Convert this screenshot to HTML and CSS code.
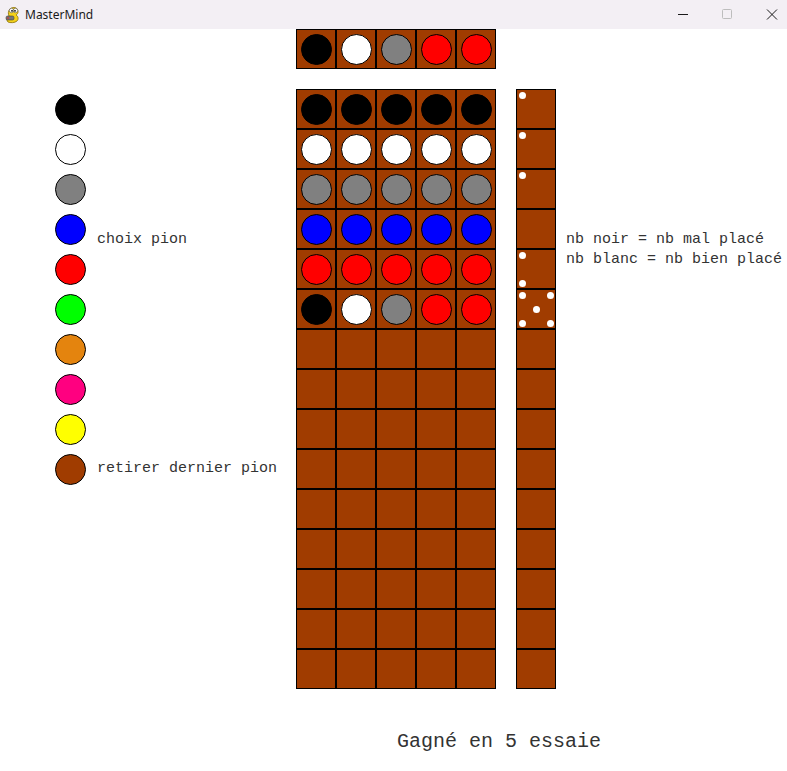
FILE: index.html
```html
<!DOCTYPE html>
<html lang="fr">
<head>
<meta charset="utf-8">
<title>MasterMind</title>
<link rel="stylesheet" href="styles.css">
</head>
<body>
<div class="titlebar">
  <svg class="app-icon" width="16" height="18" viewBox="0 0 16 18">
    <path d="M3 16 C1 14 2 11 4 10 C3 8 3 5 5 3 C7 1 11 1 12 3 C14 5 13 8 11 9 C13 10 14 13 12 15 C10 17 5 17 3 16 Z" fill="#f4d21a" stroke="#8a6d00" stroke-width="0.8"/>
    <circle cx="6.5" cy="4.5" r="2.2" fill="#fff" stroke="#333" stroke-width="0.5"/>
    <circle cx="10.5" cy="4.5" r="2.2" fill="#fff" stroke="#333" stroke-width="0.5"/>
    <circle cx="7" cy="4.8" r="0.9" fill="#000"/>
    <circle cx="10" cy="4.8" r="0.9" fill="#000"/>
    <rect x="1" y="10" width="8" height="4" rx="1.5" fill="#777" stroke="#333" stroke-width="0.5"/>
    <circle cx="3" cy="12" r="0.8" fill="#e22"/>
  </svg>
  <span class="app-title">MasterMind</span>
  <div class="controls">
    <svg class="ctl" width="44" height="29" viewBox="0 0 44 29"><path d="M17 14.5 H27" stroke="#1a1a1a" stroke-width="1"/></svg>
    <svg class="ctl" width="44" height="29" viewBox="0 0 44 29"><rect x="17.5" y="9.5" width="9" height="9" rx="1" fill="none" stroke="#bdbdbd" stroke-width="1"/></svg>
    <svg class="ctl" width="38" height="29" viewBox="0 0 38 29"><path d="M18 9.5 L28 19.5 M28 9.5 L18 19.5" stroke="#1a1a1a" stroke-width="1"/></svg>
  </div>
</div>

<div class="game">
  <div class="code">
    <div class="cell"><div class="peg black"></div></div>
    <div class="cell"><div class="peg white"></div></div>
    <div class="cell"><div class="peg gray"></div></div>
    <div class="cell"><div class="peg red"></div></div>
    <div class="cell"><div class="peg red"></div></div>
  </div>

  <div class="main">
    <div class="palette">
      <div class="prow"><div class="peg black"></div></div>
      <div class="prow"><div class="peg white"></div></div>
      <div class="prow"><div class="peg gray"></div></div>
      <div class="prow"><div class="peg blue"></div><span class="label label-choice">choix pion</span></div>
      <div class="prow"><div class="peg red"></div></div>
      <div class="prow"><div class="peg green"></div></div>
      <div class="prow"><div class="peg orange"></div></div>
      <div class="prow"><div class="peg pink"></div></div>
      <div class="prow"><div class="peg yellow"></div></div>
      <div class="prow"><div class="peg brown"></div><span class="label label-remove">retirer dernier pion</span></div>
    </div>

    <div class="board">
      <div class="cell"><div class="peg black"></div></div>
      <div class="cell"><div class="peg black"></div></div>
      <div class="cell"><div class="peg black"></div></div>
      <div class="cell"><div class="peg black"></div></div>
      <div class="cell"><div class="peg black"></div></div>

      <div class="cell"><div class="peg white"></div></div>
      <div class="cell"><div class="peg white"></div></div>
      <div class="cell"><div class="peg white"></div></div>
      <div class="cell"><div class="peg white"></div></div>
      <div class="cell"><div class="peg white"></div></div>

      <div class="cell"><div class="peg gray"></div></div>
      <div class="cell"><div class="peg gray"></div></div>
      <div class="cell"><div class="peg gray"></div></div>
      <div class="cell"><div class="peg gray"></div></div>
      <div class="cell"><div class="peg gray"></div></div>

      <div class="cell"><div class="peg blue"></div></div>
      <div class="cell"><div class="peg blue"></div></div>
      <div class="cell"><div class="peg blue"></div></div>
      <div class="cell"><div class="peg blue"></div></div>
      <div class="cell"><div class="peg blue"></div></div>

      <div class="cell"><div class="peg red"></div></div>
      <div class="cell"><div class="peg red"></div></div>
      <div class="cell"><div class="peg red"></div></div>
      <div class="cell"><div class="peg red"></div></div>
      <div class="cell"><div class="peg red"></div></div>

      <div class="cell"><div class="peg black"></div></div>
      <div class="cell"><div class="peg white"></div></div>
      <div class="cell"><div class="peg gray"></div></div>
      <div class="cell"><div class="peg red"></div></div>
      <div class="cell"><div class="peg red"></div></div>

      <div class="cell"></div><div class="cell"></div><div class="cell"></div><div class="cell"></div><div class="cell"></div>
      <div class="cell"></div><div class="cell"></div><div class="cell"></div><div class="cell"></div><div class="cell"></div>
      <div class="cell"></div><div class="cell"></div><div class="cell"></div><div class="cell"></div><div class="cell"></div>
      <div class="cell"></div><div class="cell"></div><div class="cell"></div><div class="cell"></div><div class="cell"></div>
      <div class="cell"></div><div class="cell"></div><div class="cell"></div><div class="cell"></div><div class="cell"></div>
      <div class="cell"></div><div class="cell"></div><div class="cell"></div><div class="cell"></div><div class="cell"></div>
      <div class="cell"></div><div class="cell"></div><div class="cell"></div><div class="cell"></div><div class="cell"></div>
      <div class="cell"></div><div class="cell"></div><div class="cell"></div><div class="cell"></div><div class="cell"></div>
      <div class="cell"></div><div class="cell"></div><div class="cell"></div><div class="cell"></div><div class="cell"></div>
    </div>

    <div class="feedback">
      <div class="fcell"><span class="pin tl"></span></div>
      <div class="fcell"><span class="pin tl"></span></div>
      <div class="fcell"><span class="pin tl"></span></div>
      <div class="fcell"></div>
      <div class="fcell"><span class="pin tl"></span><span class="pin bl"></span></div>
      <div class="fcell"><span class="pin tl"></span><span class="pin tr"></span><span class="pin mid"></span><span class="pin bl"></span><span class="pin br"></span></div>
      <div class="fcell"></div>
      <div class="fcell"></div>
      <div class="fcell"></div>
      <div class="fcell"></div>
      <div class="fcell"></div>
      <div class="fcell"></div>
      <div class="fcell"></div>
      <div class="fcell"></div>
      <div class="fcell"></div>
    </div>

    <div class="notes">
      <div>nb noir = nb mal placé</div>
      <div>nb blanc = nb bien placé</div>
    </div>
  </div>

  <div class="result">Gagné en 5 essaie</div>
</div>
</body>
</html>
```

FILE: styles.css
```css
* { box-sizing: border-box; }
html, body {
  margin: 0;
  padding: 0;
  background: #ffffff;
  width: 787px;
  height: 771px;
  overflow: hidden;
}

.titlebar {
  height: 29px;
  background: #f3eff4;
  display: flex;
  align-items: center;
  font-family: "Noto Sans", "Open Sans", sans-serif;
  font-size: 12px;
  color: #1a1a1a;
}
.app-icon { margin-left: 5px; margin-top: 1px; }
.app-title { margin-left: 4px; }
.controls { margin-left: auto; display: flex; align-items: center; }
.ctl { display: block; }

.game {
  font-family: "Liberation Mono", "Courier New", monospace;
  color: #333333;
}

.code {
  display: flex;
  margin-left: 296px;
}

.cell {
  width: 40px;
  height: 40px;
  background: #a03c00;
  border: 1px solid #000;
  display: flex;
  align-items: center;
  justify-content: center;
}

.main {
  display: flex;
  margin-top: 20px;
}

.palette {
  width: 296px;
  padding-left: 55px;
}
.prow {
  height: 40px;
  display: flex;
  align-items: center;
}
.label {
  align-self: flex-start;
  margin-left: 11px;
  font-size: 15px;
  line-height: 17px;
  white-space: nowrap;
}
.label-choice { margin-top: 22px; }
.label-remove { margin-top: 11px; }

.board {
  display: grid;
  grid-template-columns: repeat(5, 40px);
  grid-auto-rows: 40px;
  width: 200px;
}

.peg {
  width: 31px;
  height: 31px;
  border-radius: 50%;
  border: 1px solid #000;
  flex: none;
}
.black { background: #000000; }
.white { background: #ffffff; }
.gray { background: #808080; }
.blue { background: #0000ff; }
.red { background: #ff0000; }
.green { background: #00ff00; }
.orange { background: #e4840e; }
.pink { background: #ff0080; }
.yellow { background: #ffff00; }
.brown { background: #a03c00; }

.feedback {
  margin-left: 20px;
  width: 40px;
}
.fcell {
  width: 40px;
  height: 40px;
  background: #a03c00;
  border: 1px solid #000;
  display: grid;
  grid-template-columns: 10px 1fr 10px;
  grid-template-rows: 10px 1fr 10px;
  place-items: center;
}
.pin {
  width: 7px;
  height: 7px;
  border-radius: 50%;
  background: #ffffff;
}
.tl { grid-area: 1 / 1; }
.tr { grid-area: 1 / 3; }
.mid { grid-area: 2 / 2; }
.bl { grid-area: 3 / 1; }
.br { grid-area: 3 / 3; }

.notes {
  margin-left: 10px;
  margin-top: 141px;
  font-size: 15px;
  line-height: 20px;
  white-space: nowrap;
}

.result {
  margin-top: 41px;
  margin-left: 397px;
  font-size: 20px;
  line-height: 23px;
  white-space: nowrap;
}
```
